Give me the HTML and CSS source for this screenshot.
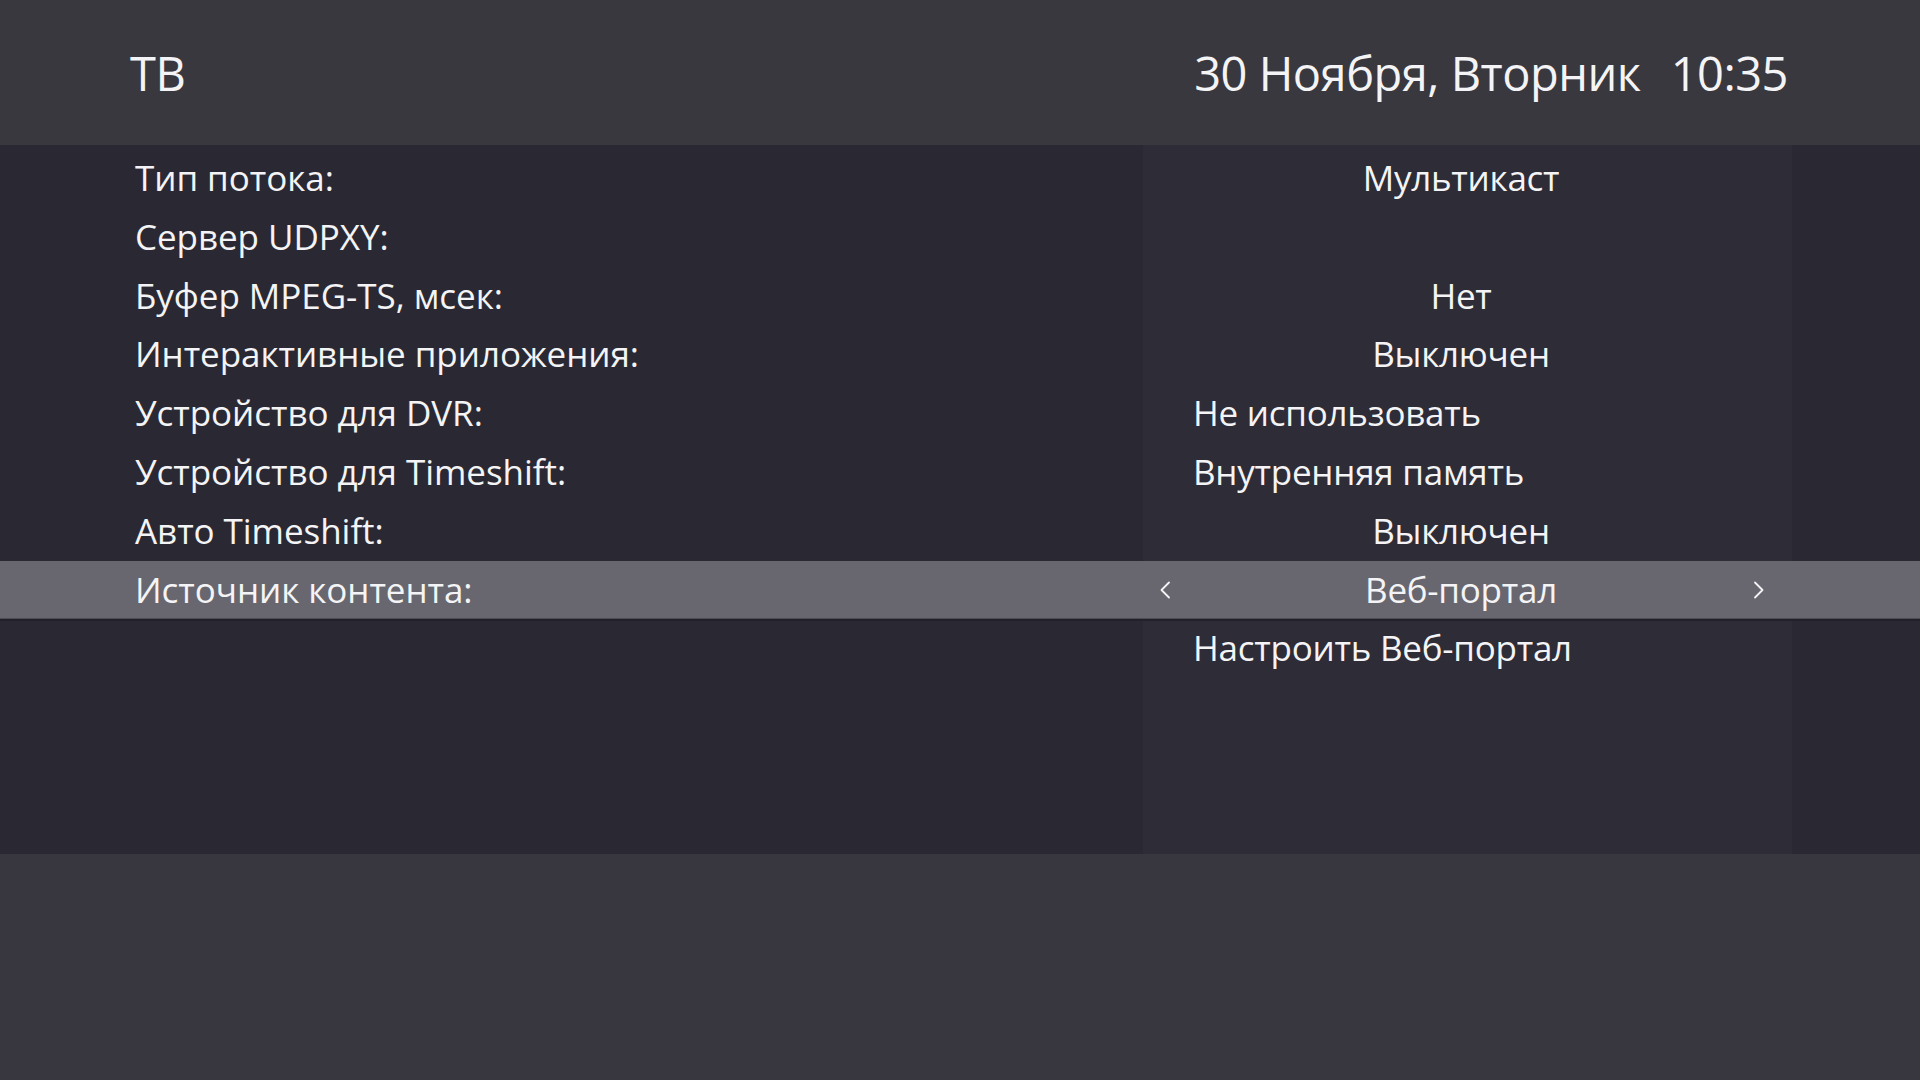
FILE: index.html
```html
<!DOCTYPE html>
<html lang="ru">
<head>
<meta charset="utf-8">
<title>ТВ</title>
<link rel="stylesheet" href="styles.css">
</head>
<body>
<div class="screen">
  <header class="topbar">
    <div class="title">ТВ</div>
    <div class="clock">
      <span class="date">30 Ноября, Вторник</span>
      <span class="time">10:35</span>
    </div>
  </header>
  <main class="settings">
    <div class="row">
      <div class="label">Тип потока:</div>
      <div class="value"><span class="text center">Мультикаст</span></div>
    </div>
    <div class="row">
      <div class="label">Сервер UDPXY:</div>
      <div class="value"><span class="text center"></span></div>
    </div>
    <div class="row">
      <div class="label">Буфер MPEG-TS, мсек:</div>
      <div class="value"><span class="text center">Нет</span></div>
    </div>
    <div class="row">
      <div class="label">Интерактивные приложения:</div>
      <div class="value"><span class="text center">Выключен</span></div>
    </div>
    <div class="row">
      <div class="label">Устройство для DVR:</div>
      <div class="value"><span class="text">Не использовать</span></div>
    </div>
    <div class="row">
      <div class="label">Устройство для Timeshift:</div>
      <div class="value"><span class="text">Внутренняя память</span></div>
    </div>
    <div class="row">
      <div class="label">Авто Timeshift:</div>
      <div class="value"><span class="text center">Выключен</span></div>
    </div>
    <div class="row selected">
      <div class="label">Источник контента:</div>
      <div class="value">
        <span class="arrow left"><svg width="12" height="18" viewBox="0 0 12 18"><path d="M10 1.5 L2.5 9 L10 16.5" fill="none" stroke="#f4f4f6" stroke-width="1.8" stroke-linecap="round" stroke-linejoin="round"/></svg></span>
        <span class="text center">Веб-портал</span>
        <span class="arrow right"><svg width="12" height="18" viewBox="0 0 12 18"><path d="M2 1.5 L9.5 9 L2 16.5" fill="none" stroke="#f4f4f6" stroke-width="1.8" stroke-linecap="round" stroke-linejoin="round"/></svg></span>
      </div>
    </div>
    <div class="row">
      <div class="label"></div>
      <div class="value"><span class="text">Настроить Веб-портал</span></div>
    </div>
  </main>
  <footer class="bottom"></footer>
</div>
</body>
</html>
```
FILE: styles.css
```css
html, body {
  margin: 0;
  padding: 0;
}

body {
  width: 1920px;
  height: 1080px;
  overflow: hidden;
  background: #38373f;
  font-family: "Open Sans", "Noto Sans", sans-serif;
  color: #f4f4f6;
}

.screen {
  display: flex;
  flex-direction: column;
  height: 1080px;
}

.topbar {
  height: 145px;
  box-sizing: border-box;
  padding: 41px 132px 0 130px;
  background: #39383f;
  display: flex;
  justify-content: space-between;
  align-items: flex-start;
  font-size: 47px;
  letter-spacing: -0.5px;
  line-height: 65px;
}

.clock {
  display: flex;
}

.time {
  margin-left: 30px;
}

.settings {
  height: 709px;
  box-sizing: border-box;
  padding-top: 4px;
  background: linear-gradient(to right,
    #2a2933 0, #2a2933 1143px,
    #2d2c37 1143px, #2d2c37 1792px,
    #2a2933 1792px, #2a2933 100%);
  display: flex;
  flex-direction: column;
}

.row {
  height: 58.75px;
  display: grid;
  grid-template-columns: 1143px 636px 1fr;
  align-items: center;
  font-size: 35px;
  line-height: 58.75px;
}

.row.selected {
  background: #68676f;
  height: 57px;
  line-height: 57px;
  margin-top: 1px;
  border-bottom: 1px solid #4d4c55;
  box-shadow: 0 2px 0 #22212a;
}

.label {
  padding-left: 135px;
  white-space: nowrap;
  letter-spacing: -0.05px;
}

.value {
  display: grid;
  grid-template-columns: 50px 1fr 50px;
  align-items: center;
  white-space: nowrap;
  letter-spacing: -0.25px;
}

.value .text {
  grid-column: 2;
  grid-row: 1;
  justify-self: start;
}

.value .text.center {
  grid-column: 1 / 4;
  justify-self: center;
}

.arrow {
  grid-row: 1;
  display: flex;
  align-items: center;
  height: 57px;
}

.arrow.left {
  grid-column: 1;
  padding-left: 16px;
}

.arrow.right {
  grid-column: 3;
  padding-left: 24px;
}

.bottom {
  flex: 1;
  background: #38373f;
}
```
